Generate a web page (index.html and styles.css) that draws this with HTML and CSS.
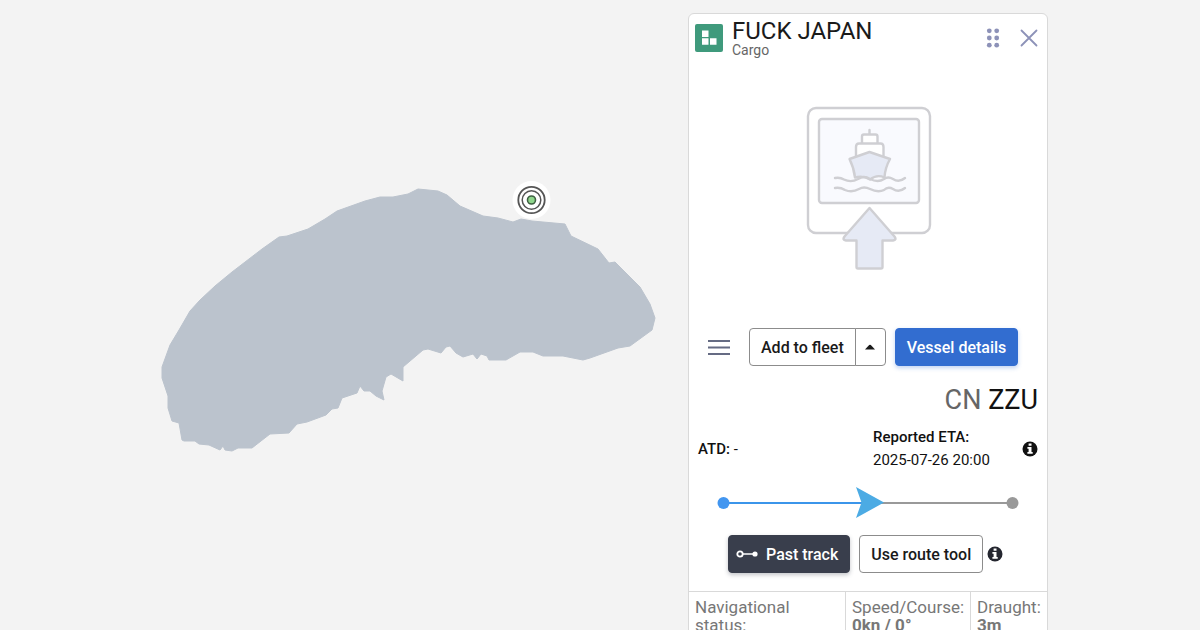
FILE: index.html
```html
<!DOCTYPE html>
<html lang="en">
<head>
<meta charset="utf-8">
<title>Vessel map</title>
<link rel="stylesheet" href="styles.css">
</head>
<body>
<main class="map">
  <svg class="map-canvas" viewBox="0 0 1200 630" preserveAspectRatio="xMinYMin slice" aria-hidden="true">
    <path class="island" d="M162 378L162 367L170 345L179 330L190 311L200 300L215 286L232 272L262 249L279 237L287 236L308 229L325 219L337 211L365 201L380 197L393 197L408 194L418 189L438 191L447 195L460 206L483 216L498 218L513 222L521 219L532 221L565 224L567 228L571 236L598 249L609 263L615 262L640 287L650 304L655 318L652 330L630 346L618 348L590 358L583 360L563 356L543 356L533 352L520 352L506 360L489 360L487 356L481 354L477 359L473 354L463 357L456 353L450 346L446 347L441 353L428 349L423 350L403 367L403 381L391 374L386 377L382 391L384 400L376 396L370 391L364 391L360 386L357 393L342 398L338 408L332 409L326 415L307 422L297 424L289 433L270 434L252 448L238 448L232 451L225 450L223 446L220 450L209 445L199 444L195 441L184 441L182 440L179 423L172 421L168 408L168 396Z"/>
    <circle cx="531.500" cy="200" r="19" fill="#fff"/>
    <g stroke="#555" fill="none">
      <circle cx="531.500" cy="200" r="13.200" stroke-width="1.800"/>
      <circle cx="531.500" cy="200" r="9.300" stroke-width="1.500"/>
      <circle cx="531.500" cy="200" r="4" stroke-width="1.600" fill="#8fd68c" stroke="#3f5f42"/>
    </g>
  </svg>

  <section class="panel" aria-label="Vessel">
    <header class="panel-head">
      <svg class="flag" viewBox="0 0 28 28" aria-hidden="true"><rect width="28" height="28" rx="2" fill="#3f9a7c"/><path fill="#fff" d="M7 6.500h6.500V13H7zM7 14.200h6.500v6.500H7zM15 14.200h6.500v6.500H15z"/></svg>
      <div class="names">
        <h1>FUCK JAPAN</h1>
        <p>Cargo</p>
      </div>
      <button class="icon-btn" aria-label="Move panel"><svg width="16" height="20" viewBox="0 0 16 20"><g fill="#8d92b8"><circle cx="4.300" cy="2.800" r="2.400"/><circle cx="11.700" cy="2.800" r="2.400"/><circle cx="4.300" cy="10" r="2.400"/><circle cx="11.700" cy="10" r="2.400"/><circle cx="4.300" cy="17.200" r="2.400"/><circle cx="11.700" cy="17.200" r="2.400"/></g></svg></button>
      <button class="icon-btn" aria-label="Close"><svg width="18" height="18" viewBox="0 0 18 18"><path d="M1.500 1.500l15 15m0-15l-15 15" stroke="#8d92b8" stroke-width="1.800" stroke-linecap="round"/></svg></button>
    </header>

    <div class="photo">
      <svg width="128" height="168" viewBox="0 0 128 168" fill="none" stroke="#cfcfd3" stroke-width="2.400" stroke-linejoin="round" stroke-linecap="round" role="img" aria-label="Upload a vessel photo">
        <rect x="3" y="4" width="122" height="125" rx="8"/>
        <rect x="14" y="15" width="100" height="84" rx="3" fill="#f9fafe"/>
        <path d="M64.500 26v4M57 39v-6.500q0-2 2-2h11.500q2 0 2 2V39M51 52v-9c0-2.500 1-3.500 3-3.500h21.500c2 0 3 1 3 3.500v9" fill="#fff"/>
        <path d="M50 73.500Q49 64 44.500 55L64.500 48L85 55Q80 64 79.500 73.500Q72 70 65 75.500Q58 71 50 73.500Z" fill="#e6eaf5"/>
        <path d="M30 74Q35 73 39 75.500Q46 79 53 75Q59 71 65 75Q73 79 79 75Q83 72 88 75Q94 79 100 74M30 84Q35 83 40 86Q47 89 54 85Q59 82 65 85Q73 89 79 86Q83 82 88 85Q94 89 100 84"/>
        <path d="M64.500 104L89.500 132.500Q92 136 88 136.500H77.500V163q0 1.500-1.500 1.500H53q-1.500 0-1.500-1.500V136.500H41Q37 136 39.500 132.500Z" fill="#e6eaf5"/>
      </svg>
    </div>

    <div class="actions">
      <button class="icon-btn menu" aria-label="Menu"><svg width="22" height="15" viewBox="0 0 22 15"><path d="M0 1h22M0 7.500h22M0 14h22" stroke="#656b83" stroke-width="2"/></svg></button>
      <div class="split">
        <button class="btn">Add to fleet</button>
        <button class="btn caret" aria-label="More fleet options"><svg width="10" height="6" viewBox="0 0 10 6"><path d="M0 5.500L4.200 1Q5 .3 5.800 1L10 5.500Z" fill="#1a1a1a"/></svg></button>
      </div>
      <button class="btn primary">Vessel details</button>
    </div>

    <p class="port"><span>CN</span> ZZU</p>

    <div class="times">
      <p class="atd"><b>ATD:</b> -</p>
      <p class="eta"><b>Reported ETA:</b><br>2025-07-26 20:00</p>
      <button class="icon-btn" aria-label="About reported ETA"><svg width="16" height="16" viewBox="0 0 16 16"><circle cx="8" cy="8" r="7.500" fill="#111"/><path fill="#fff" d="M6.600 2.500h2.900v2.300H6.600zM5.400 6h4.100v4.900h1.200v1.800H5.400v-1.800h1.200V7.800H5.400z"/></svg></button>
    </div>

    <svg class="progress" viewBox="0 0 304 32" role="img" aria-label="Voyage progress">
      <path d="M144 16h150" stroke="#999" stroke-width="2"/>
      <path d="M8 16h140" stroke="#3b95ea" stroke-width="2"/>
      <circle cx="7.500" cy="16" r="6" fill="#4296f0"/>
      <circle cx="296.500" cy="16" r="6" fill="#999"/>
      <path d="M140 0L168 15.500L140 31L145.500 15.500Z" fill="#4cabe4"/>
    </svg>

    <div class="tools">
      <button class="btn dark"><svg width="22" height="8" viewBox="0 0 22 8"><circle cx="4" cy="4" r="2.700" stroke="#fff" stroke-width="1.800" fill="none"/><path d="M7 4h11" stroke="#fff" stroke-width="1.500"/><circle cx="19" cy="4" r="2.600" fill="#fff"/></svg>Past track</button>
      <button class="btn">Use route tool</button>
      <button class="icon-btn" aria-label="About the route tool"><svg width="16" height="16" viewBox="0 0 16 16"><circle cx="8" cy="8" r="7.500" fill="#24262f"/><path fill="#fff" d="M6.600 2.500h2.900v2.300H6.600zM5.400 6h4.100v4.900h1.200v1.800H5.400v-1.800h1.200V7.800H5.400z"/></svg></button>
    </div>

    <dl class="stats">
      <div><dt>Navigational status:</dt></div>
      <div><dt>Speed/Course:</dt><dd>0kn / 0°</dd></div>
      <div><dt>Draught:</dt><dd>3m</dd></div>
    </dl>
  </section>
</main>
</body>
</html>
```

FILE: styles.css
```css
* { box-sizing: border-box; }
body { margin: 0; font-family: Roboto, "Liberation Sans", sans-serif; color: #1a1a1a; }
h1, p, dl, dd { margin: 0; }
button { font: inherit; color: inherit; cursor: pointer; }
svg { display: block; flex: none; }

.map { position: relative; height: 100vh; overflow: hidden; background: #f3f3f3; }
.map-canvas { width: 100%; height: 100%; }
.island { fill: #bbc3cd; stroke: #bbc3cd; stroke-width: 1; stroke-linejoin: round; }

.panel {
  position: absolute;
  top: 13px;
  right: 152px;
  width: 360px;
  background: #fff;
  border: 1px solid #d9d9d9;
  border-radius: 6px;
}
.panel-head { display: flex; align-items: flex-start; padding: 3px 9px 0 6px; }
.flag { width: 28px; height: 28px; margin-top: 7px; }
.names { flex: 1; margin-left: 9px; }
.names h1 { font-size: 24px; font-weight: 400; line-height: 28px; }
.names p { font-size: 14px; line-height: 10px; color: #666; }
.icon-btn { display: flex; padding: 0; border: 0; background: none; }
.panel-head .icon-btn { align-items: center; height: 20px; margin-top: 11px; }
.panel-head .icon-btn + .icon-btn { margin-left: 19px; }

.photo { display: flex; justify-content: center; padding: 49px 0 56px 2px; }

.actions { display: flex; align-items: center; padding-left: 19px; }
.menu { margin-right: 19px; }
.split { display: flex; margin-right: 9px; }
.btn {
  display: flex;
  align-items: center;
  gap: 8px;
  height: 38px;
  padding: 0 11px;
  border: 1px solid #8c8c8c;
  border-radius: 4px;
  background: #fff;
  font-size: 16px;
  font-weight: 500;
  white-space: nowrap;
}
.split .btn:first-child { border-radius: 4px 0 0 4px; }
.split .caret { width: 31px; margin-left: -1px; padding: 0 9px; border-radius: 0 4px 4px 0; }
.primary { border-color: #326dd0; background: #326dd0; color: #fff; box-shadow: 0 2px 4px #326dd04d; }
.dark { padding: 0 11px 0 7px; border-color: #393e4c; background: #393e4c; color: #fff; box-shadow: 0 2px 4px #393e4c4d; }

.port { padding: 18px 9px 0 0; font-size: 27px; line-height: 32px; text-align: right; color: #111; }
.port span { color: #666; }

.times { display: flex; align-items: center; padding: 10px 9px 0 9px; font-size: 15px; line-height: 23px; color: #111; }
.times b { font-weight: 500; }
.atd { width: 175px; }
.eta { flex: 1; }

.progress { width: 304px; height: 32px; margin: 15px 0 0 27px; }
.tools { display: flex; align-items: center; gap: 9px; margin-top: 16px; padding: 0 0 18px 39px; }
.tools .icon-btn { margin-left: -5px; }

.stats { display: grid; grid-template-columns: 156px 125px 1fr; border-top: 1px solid #d9d9d9; font-size: 17px; line-height: 18px; color: #777; }
.stats > div { padding: 6px 0 12px 6px; }
.stats > div:first-child { padding-right: 6px; }
.stats > div + div { border-left: 1px solid #d9d9d9; }
.stats dd { font-weight: 700; }
```
